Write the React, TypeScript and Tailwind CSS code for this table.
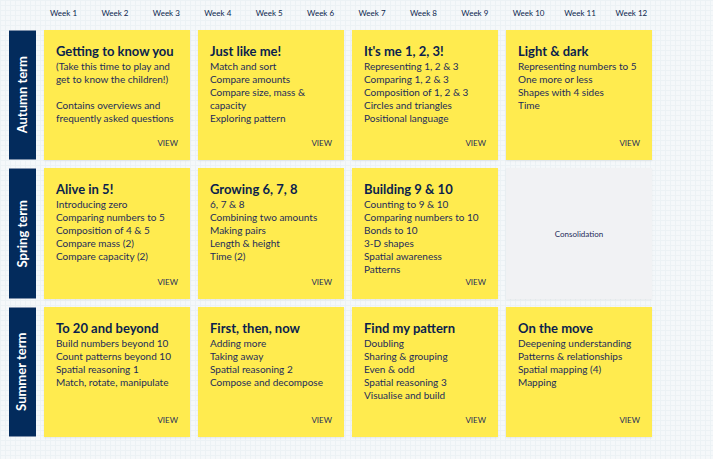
import React from 'react'

type Unit = { title: string; lines: string[] }

const terms: { name: string; units: (Unit | null)[] }[] = [
  {
    name: 'Autumn term',
    units: [
      {
        title: 'Getting to know you',
        lines: [
          '(Take this time to play and',
          'get to know the children!)',
          '',
          'Contains overviews and',
          'frequently asked questions',
        ],
      },
      {
        title: 'Just like me!',
        lines: ['Match and sort', 'Compare amounts', 'Compare size, mass &', 'capacity', 'Exploring pattern'],
      },
      {
        title: "It's me 1, 2, 3!",
        lines: [
          'Representing 1, 2 & 3',
          'Comparing 1, 2 & 3',
          'Composition of 1, 2 & 3',
          'Circles and triangles',
          'Positional language',
        ],
      },
      {
        title: 'Light & dark',
        lines: ['Representing numbers to 5', 'One more or less', 'Shapes with 4 sides', 'Time'],
      },
    ],
  },
  {
    name: 'Spring term',
    units: [
      {
        title: 'Alive in 5!',
        lines: [
          'Introducing zero',
          'Comparing numbers to 5',
          'Composition of 4 & 5',
          'Compare mass (2)',
          'Compare capacity (2)',
        ],
      },
      {
        title: 'Growing 6, 7, 8',
        lines: ['6, 7 & 8', 'Combining two amounts', 'Making pairs', 'Length & height', 'Time (2)'],
      },
      {
        title: 'Building 9 & 10',
        lines: [
          'Counting to 9 & 10',
          'Comparing numbers to 10',
          'Bonds to 10',
          '3-D shapes',
          'Spatial awareness',
          'Patterns',
        ],
      },
      null,
    ],
  },
  {
    name: 'Summer term',
    units: [
      {
        title: 'To 20 and beyond',
        lines: [
          'Build numbers beyond 10',
          'Count patterns beyond 10',
          'Spatial reasoning 1',
          'Match, rotate, manipulate',
        ],
      },
      {
        title: 'First, then, now',
        lines: ['Adding more', 'Taking away', 'Spatial reasoning 2', 'Compose and decompose'],
      },
      {
        title: 'Find my pattern',
        lines: ['Doubling', 'Sharing & grouping', 'Even & odd', 'Spatial reasoning 3', 'Visualise and build'],
      },
      {
        title: 'On the move',
        lines: ['Deepening understanding', 'Patterns & relationships', 'Spatial mapping (4)', 'Mapping'],
      },
    ],
  },
]

const weeks = Array.from({ length: 12 }, (_, i) => `Week ${i + 1}`)

function UnitCard({ unit }: { unit: Unit }) {
  return (
    <div className="flex flex-col bg-[#ffeb4f] px-3 pt-[13px] pb-[12px] shadow-[0_1px_2px_rgba(0,0,0,0.07)]">
      <h3 className="whitespace-nowrap text-[13px] font-bold leading-[17px] text-[#0b1f4d]">{unit.title}</h3>
      <ul className="text-[10px] leading-[13px] text-[#1d2b5a]">
        {unit.lines.map((l, i) => (
          <li key={i} className="h-[13px] whitespace-nowrap">
            {l}
          </li>
        ))}
      </ul>
      <div className="mt-auto text-right text-[8px] leading-[10px] text-[#1d2b5a]">VIEW</div>
    </div>
  )
}

export default function App() {
  return (
    <div
      className="h-[459px] w-[713px] overflow-hidden bg-[#f5f8fa] bg-[linear-gradient(to_right,#ecf2f5_1px,transparent_1px),linear-gradient(to_bottom,#ecf2f5_1px,transparent_1px)] bg-[size:5px_5px] pl-[9px] pt-[8px]"
      style={{ fontFamily: 'Lato, "Liberation Sans", sans-serif' }}
    >
      <div className="ml-[35px] grid h-[22px] w-[617px] grid-cols-12">
        {weeks.map((w) => (
          <div key={w} className="pl-[6px] text-[8px] leading-[10px] text-[#0b1f4d]">
            {w}
          </div>
        ))}
      </div>
      <div className="grid grid-cols-[27px_repeat(4,146px)] grid-rows-[130px_131px_130px] gap-x-[8px] gap-y-[8px]">
        {terms.map((t) => (
          <React.Fragment key={t.name}>
            <div className="flex items-center justify-center border-y border-[#7e90aa] bg-[#032b5c]">
              <span className="-rotate-90 whitespace-nowrap text-[13px] font-bold text-white">{t.name}</span>
            </div>
            {t.units.map((u, i) =>
              u ? (
                <UnitCard key={i} unit={u} />
              ) : (
                <div
                  key={i}
                  className="flex items-center justify-center bg-[#f1f2f4] text-[8px] text-[#1d2b5a] shadow-[0_1px_2px_rgba(0,0,0,0.06)]"
                >
                  Consolidation
                </div>
              ),
            )}
          </React.Fragment>
        ))}
      </div>
    </div>
  )
}
